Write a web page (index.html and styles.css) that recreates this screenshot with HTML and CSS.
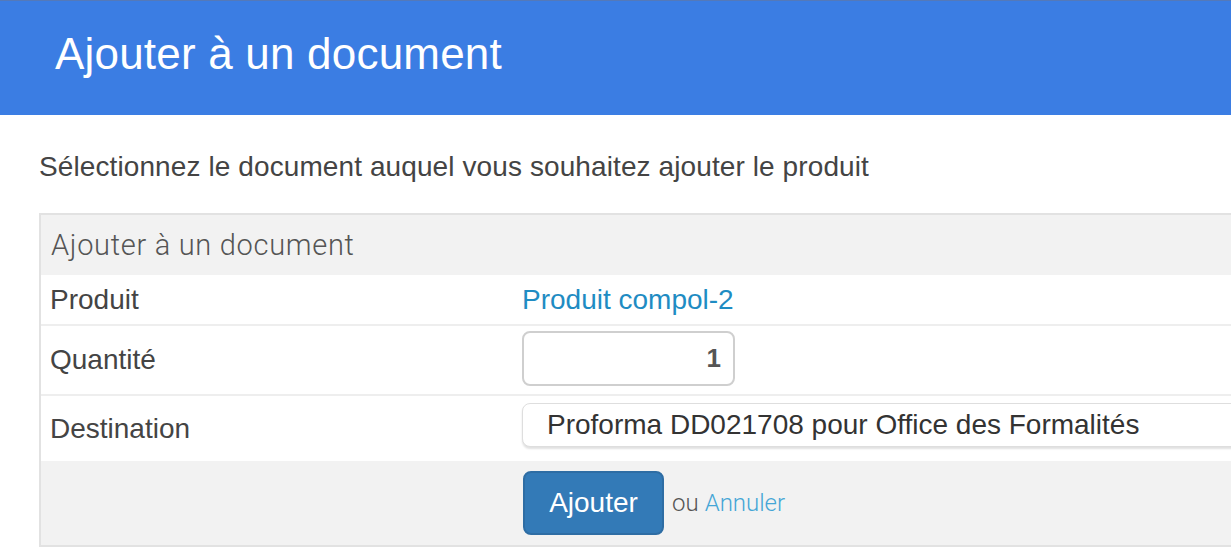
FILE: index.html
```html
<!DOCTYPE html>
<html lang="fr">
<head>
    <meta charset="UTF-8">
    <meta name="viewport" content="width=device-width, initial-scale=1.0">
    <title>Ajouter à un document</title>
    <link rel="stylesheet" href="styles.css">
</head>
<body>
    <header class="page-header">
        <h1>Ajouter à un document</h1>
    </header>

    <main class="content">
        <p class="intro">Sélectionnez le document auquel vous souhaitez ajouter le produit</p>

        <form class="panel">
            <div class="panel-heading">Ajouter à un document</div>

            <div class="field-row row-product">
                <div class="field-label">Produit</div>
                <div class="field-value"><a href="#" class="link">Produit compol-2</a></div>
            </div>

            <div class="field-row row-quantity">
                <div class="field-label">Quantité</div>
                <div class="field-value"><input type="text" class="qty-input" value="1"></div>
            </div>

            <div class="field-row row-destination">
                <div class="field-label">Destination</div>
                <div class="field-value">
                    <select class="doc-select">
                        <option>Proforma DD021708 pour Office des Formalités</option>
                    </select>
                </div>
            </div>

            <!-- Actions -->
            <div class="panel-footer">
                <div></div>
                <div class="actions">
                    <button type="button" class="btn-primary">Ajouter</button>
                    <span class="or">ou</span>
                    <a href="#" class="cancel">Annuler</a>
                </div>
            </div>
        </form>
    </main>
</body>
</html>
```

FILE: styles.css
```css
html, body {
    margin: 0;
    overflow: hidden;
}
body {
    font-family: "Liberation Sans", Arial, Helvetica, sans-serif;
    font-size: 28px;
    color: #444;
    background-color: #fff;
    width: 1231px;
    height: 557px;
}
.page-header {
    background-color: #3b7de3;
    height: 115px;
    box-sizing: border-box;
    border-top: 1px solid #5479b9;
    padding: 31px 0 0 55px;
}
.page-header h1 {
    margin: 0;
    font-size: 44px;
    font-weight: normal;
    letter-spacing: 0.2px;
    line-height: 1;
    color: #fff;
}
.intro {
    margin: 32px 0 26px 39px;
    line-height: 40px;
    letter-spacing: 0.1px;
}
.panel {
    margin-left: 39px;
    width: 1260px;
    border: 2px solid #e2e2e2;
    border-right: none;
}
.panel-heading {
    background-color: #f2f2f2;
    height: 60px;
    line-height: 60px;
    padding: 0 10px;
    font-family: Roboto, "Liberation Sans", sans-serif;
    font-size: 29px;
    font-weight: 300;
    letter-spacing: 0.7px;
    color: #555;
}
.field-row,
.panel-footer {
    display: grid;
    grid-template-columns: 481px 1fr;
    align-items: center;
}
.field-row {
    border-bottom: 2px solid #eeeeee;
}
.row-product { height: 49px; }
.row-quantity { height: 68px; }
.row-destination {
    height: 65px;
    border-bottom: none;
}
.field-label {
    padding-left: 9px;
}
.link {
    color: #1f8cc3;
    text-decoration: none;
}
.qty-input {
    display: block;
    box-sizing: border-box;
    width: 213px;
    height: 55px;
    margin: 0 0 3px;
    padding: 0 12px;
    border: 2px solid #cfcfcf;
    border-radius: 8px;
    font-family: inherit;
    font-size: 26px;
    font-weight: bold;
    color: #555;
    text-align: right;
}
.doc-select {
    display: block;
    box-sizing: border-box;
    width: 100%;
    height: 44px;
    margin: 0 0 8px;
    padding: 0 24px;
    appearance: none;
    -webkit-appearance: none;
    background-color: #fff;
    border: 1px solid #dedede;
    border-radius: 8px;
    box-shadow: 0 2px 2px rgba(0,0,0,0.12);
    font-family: inherit;
    font-size: 28px;
    color: #333;
}
.panel-footer {
    background-color: #f2f2f2;
    height: 84px;
}
.actions {
    display: flex;
    align-items: center;
}
.btn-primary {
    box-sizing: border-box;
    width: 141px;
    height: 64px;
    margin-left: 1px;
    background-color: #337ab7;
    border: 2px solid #2e6da4;
    border-radius: 8px;
    color: #fff;
    font-family: inherit;
    font-size: 28px;
    cursor: pointer;
}
.or,
.cancel {
    font-family: Roboto, "Liberation Sans", sans-serif;
    font-size: 24px;
    font-weight: 300;
}
.or {
    margin-left: 8px;
    color: #555;
}
.cancel {
    margin-left: 6px;
    color: #45a6d6;
    text-decoration: none;
}
```
